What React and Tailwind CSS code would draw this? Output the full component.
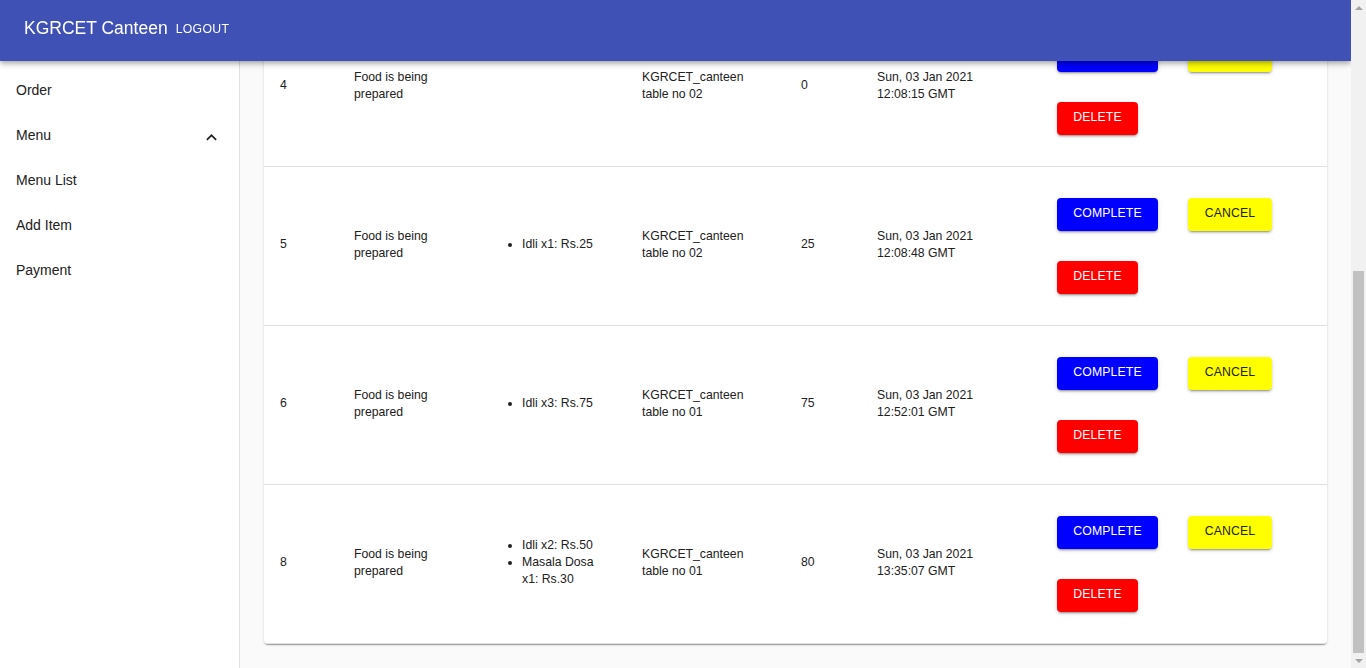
import { useEffect, useLayoutEffect } from 'react';

// orders shown in the kitchen dashboard
const orders = [
  {
    id: 2,
    status: 'Food is being prepared',
    items: ['Idli x2: Rs.50'],
    place: 'KGRCET_canteen table no 03',
    amount: 50,
    time: ['Sun, 03 Jan 2021', '11:40:22 GMT'],
  },
  {
    id: 3,
    status: 'Food is being prepared',
    items: ['Masala Dosa x1: Rs.30'],
    place: 'KGRCET_canteen table no 01',
    amount: 30,
    time: ['Sun, 03 Jan 2021', '11:58:40 GMT'],
  },
  {
    id: 4,
    status: 'Food is being prepared',
    items: [],
    place: 'KGRCET_canteen table no 02',
    amount: 0,
    time: ['Sun, 03 Jan 2021', '12:08:15 GMT'],
  },
  {
    id: 5,
    status: 'Food is being prepared',
    items: ['Idli x1: Rs.25'],
    place: 'KGRCET_canteen table no 02',
    amount: 25,
    time: ['Sun, 03 Jan 2021', '12:08:48 GMT'],
  },
  {
    id: 6,
    status: 'Food is being prepared',
    items: ['Idli x3: Rs.75'],
    place: 'KGRCET_canteen table no 01',
    amount: 75,
    time: ['Sun, 03 Jan 2021', '12:52:01 GMT'],
  },
  {
    id: 8,
    status: 'Food is being prepared',
    items: ['Idli x2: Rs.50', 'Masala Dosa x1: Rs.30'],
    place: 'KGRCET_canteen table no 01',
    amount: 80,
    time: ['Sun, 03 Jan 2021', '13:35:07 GMT'],
  },
];

const btnShadow =
  'shadow-[0_3px_1px_-2px_rgba(0,0,0,0.2),0_2px_2px_0_rgba(0,0,0,0.14),0_1px_5px_0_rgba(0,0,0,0.12)]';

function ActionButton({ label, color }) {
  return (
    <button
      className={`m-[15px] h-[33px] pb-[2px] rounded-[4px] text-[12.25px] uppercase tracking-[0.15px] ${btnShadow} ${color}`}
    >
      {label}
    </button>
  );
}

function Sidebar() {
  const items = ['Order', 'Menu', 'Menu List', 'Add Item', 'Payment'];
  return (
    <aside className="fixed top-0 left-0 h-screen w-[240px] bg-white border-r border-[#e0e0e0] pt-[61px] z-10">
      <ul className="pt-[7px]">
        {items.map((item) => (
          <li
            key={item}
            className="h-[45px] flex items-center justify-between pl-4 pr-[17px] text-[14px] text-[#212121]"
          >
            {item}
            {item === 'Menu' && (
              <svg viewBox="0 0 24 24" className="w-[21px] h-[21px] mt-[4px]" fill="currentColor">
                <path d="M12 8l-6 6 1.41 1.41L12 10.83l4.59 4.58L18 14z" />
              </svg>
            )}
          </li>
        ))}
      </ul>
    </aside>
  );
}

// window scrollbar as it looks in the desktop browser
function Scrollbar() {
  return (
    <div className="fixed top-0 right-0 bottom-0 w-[15px] bg-[#f1f1f1] z-30 flex flex-col items-center">
      <div className="h-[15px] flex items-center justify-center">
        <div className="w-0 h-0 border-l-[4px] border-r-[4px] border-b-[4px] border-l-transparent border-r-transparent border-b-[#a3a3a3]" />
      </div>
      <div className="flex-1 w-full px-[2px] flex flex-col justify-end">
        <div className="h-[382px] bg-[#c1c1c1]" />
      </div>
      <div className="h-[15px] flex items-center justify-center">
        <div className="w-0 h-0 border-l-[4px] border-r-[4px] border-t-[4px] border-l-transparent border-r-transparent border-t-[#a3a3a3]" />
      </div>
    </div>
  );
}

export default function App() {
  // page is viewed scrolled to the bottom of the orders list
  useLayoutEffect(() => {
    window.scrollTo(0, document.documentElement.scrollHeight);
  }, []);
  useEffect(() => {
    window.scrollTo(0, document.documentElement.scrollHeight);
  }, []);

  return (
    <div className="font-['Liberation_Sans',Arial,sans-serif] bg-[#fafafa] min-h-screen pr-[15px]">
      {/* ===== app bar ===== */}
      <header className="fixed top-0 left-0 right-[15px] h-[61px] bg-[#3f51b5] text-white z-20 shadow-[0_2px_4px_-1px_rgba(0,0,0,0.2),0_4px_5px_0_rgba(0,0,0,0.14),0_1px_10px_0_rgba(0,0,0,0.12)]">
        <div className="h-[57px] flex items-center px-6">
          <h1 className="text-[17.5px] leading-none">KGRCET Canteen</h1>
          <button className="ml-[8px] mt-[1px] text-[12.25px] uppercase tracking-[0.3px]">Logout</button>
        </div>
      </header>

      <Sidebar />
      <Scrollbar />

      {/* ===== orders table ===== */}
      <main className="ml-[240px] pt-[85px] px-6 pb-6">
        <div className="bg-white rounded-[4px] overflow-hidden shadow-[0_2px_1px_-1px_rgba(0,0,0,0.2),0_1px_1px_0_rgba(0,0,0,0.14),0_1px_3px_0_rgba(0,0,0,0.12)]">
          <table className="w-full table-fixed text-[12.25px] leading-[17px] text-[#212121]">
            <thead>
              <tr className="border-b border-[#e0e0e0] h-[51px] text-left">
                <th className="w-[74px] px-4 font-medium">ID</th>
                <th className="w-[144px] px-4 font-medium">Status</th>
                <th className="w-[144px] px-4 font-medium">Items</th>
                <th className="w-[159px] px-4 font-medium">Table</th>
                <th className="w-[76px] px-4 font-medium">Amount</th>
                <th className="w-[165px] px-4 font-medium">Time</th>
                <th className="px-4 font-medium">Actions</th>
              </tr>
            </thead>
            <tbody>
              {orders.map((o) => (
                <tr key={o.id} className="border-b border-[#e0e0e0] h-[159px] align-middle">
                  <td className="px-4 pb-[2px]">{o.id}</td>
                  <td className="px-4 pb-[2px]">{o.status}</td>
                  <td className="px-4 pb-[2px]">
                    <ul className="list-disc pl-6">
                      {o.items.map((it) => (
                        <li key={it}>{it}</li>
                      ))}
                    </ul>
                  </td>
                  <td className="px-4 pb-[2px]">{o.place}</td>
                  <td className="px-4 pb-[2px]">{o.amount}</td>
                  <td className="px-4 pb-[2px]">
                    {o.time[0]}
                    <br />
                    {o.time[1]}
                  </td>
                  <td className="p-4">
                    <div className="flex flex-wrap">
                      <ActionButton label="Complete" color="w-[101px] bg-[#0000ff] text-white" />
                      <ActionButton label="Cancel" color="w-[84px] bg-[#ffff00] text-[#212121]" />
                      <ActionButton label="Delete" color="w-[81px] bg-[#ff0000] text-white" />
                    </div>
                  </td>
                </tr>
              ))}
            </tbody>
          </table>
        </div>
      </main>
    </div>
  );
}
